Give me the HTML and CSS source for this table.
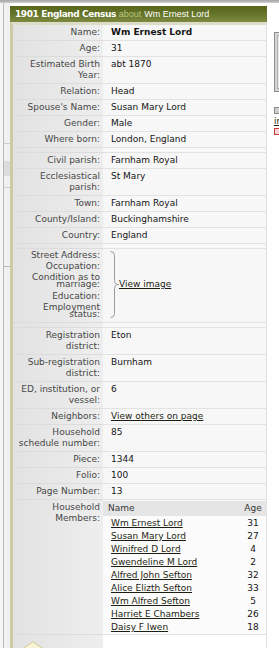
FILE: index.html
```html
<!DOCTYPE html>
<html>
<head>
<meta charset="utf-8">
<title>1901 England Census</title>
<link rel="stylesheet" href="styles.css">
</head>
<body>
<div class="topbar"></div>
<div class="layout">
  <div class="leftcol">
    <div class="lc-inner">
      <div class="lc-gap1"></div>
      <div class="lc-line"></div>
      <div class="lc-gap2"></div>
      <div class="lc-box"></div>
      <div class="lc-gap3"></div>
      <div class="lc-line"></div>
      <div class="lc-gap4"></div>
      <div class="lc-line dark"></div>
    </div>
  </div>

  <div class="panel">
    <div class="panel-head"><b class="ttl">1901 England Census</b> <span class="about">about</span> <span class="who">Wm Ernest Lord</span></div>
    <div class="panel-body">
      <div class="row"><div class="lbl">Name:</div><div class="val strong">Wm Ernest Lord</div></div>
      <div class="row"><div class="lbl">Age:</div><div class="val">31</div></div>
      <div class="row"><div class="lbl">Estimated Birth Year:</div><div class="val">abt 1870</div></div>
      <div class="row"><div class="lbl">Relation:</div><div class="val">Head</div></div>
      <div class="row"><div class="lbl">Spouse's Name:</div><div class="val">Susan Mary Lord</div></div>
      <div class="row"><div class="lbl">Gender:</div><div class="val">Male</div></div>
      <div class="row"><div class="lbl">Where born:</div><div class="val">London, England</div></div>
      <div class="row spacer"><div class="lbl"></div><div class="val"></div></div>
      <div class="row"><div class="lbl">Civil parish:</div><div class="val">Farnham Royal</div></div>
      <div class="row"><div class="lbl">Ecclesiastical parish:</div><div class="val">St Mary</div></div>
      <div class="row"><div class="lbl">Town:</div><div class="val">Farnham Royal</div></div>
      <div class="row"><div class="lbl">County/Island:</div><div class="val">Buckinghamshire</div></div>
      <div class="row"><div class="lbl">Country:</div><div class="val">England</div></div>
      <div class="row spacer"><div class="lbl"></div><div class="val"></div></div>
      <div class="row block">
        <div class="lbl stack">
          <div class="s1">Street Address:</div>
          <div class="s1">Occupation:</div>
          <div class="s2">Condition as to<br>marriage:</div>
          <div class="s1">Education:</div>
          <div class="s2">Employment<br>status:</div>
        </div>
        <div class="val brace-cell">
          <svg class="brace" width="9" height="67" viewBox="0 0 9 67">
            <path d="M0.5 0.5 Q4.5 0.5 4.5 4.5 L4.5 29.5 Q4.5 33.5 7.5 33.5 Q4.5 33.5 4.5 37.5 L4.5 62.5 Q4.5 66.5 0.5 66.5" fill="none" stroke="#9a9a9a" stroke-width="1"/>
            <path d="M7.5 33.5 L9 33.5" stroke="#9a9a9a" stroke-width="1"/>
          </svg>
          <a class="lnk" href="#">View image</a>
        </div>
      </div>
      <div class="row spacer"><div class="lbl"></div><div class="val"></div></div>
      <div class="row"><div class="lbl">Registration district:</div><div class="val">Eton</div></div>
      <div class="row"><div class="lbl">Sub-registration district:</div><div class="val">Burnham</div></div>
      <div class="row"><div class="lbl">ED, institution, or vessel:</div><div class="val">6</div></div>
      <div class="row"><div class="lbl">Neighbors:</div><div class="val"><a class="lnk" href="#">View others on page</a></div></div>
      <div class="row"><div class="lbl">Household schedule number:</div><div class="val">85</div></div>
      <div class="row"><div class="lbl">Piece:</div><div class="val">1344</div></div>
      <div class="row"><div class="lbl">Folio:</div><div class="val">100</div></div>
      <div class="row"><div class="lbl">Page Number:</div><div class="val">13</div></div>
      <div class="row">
        <div class="lbl">Household Members:</div>
        <div class="val hh-cell">
          <div class="hh-head"><span>Name</span><span class="age">Age</span></div>
          <div class="hh-list">
            <div class="hh-item"><a class="lnk" href="#">Wm Ernest Lord</a><span class="age">31</span></div>
            <div class="hh-item"><a class="lnk" href="#">Susan Mary Lord</a><span class="age">27</span></div>
            <div class="hh-item"><a class="lnk" href="#">Winifred D Lord</a><span class="age">4</span></div>
            <div class="hh-item"><a class="lnk" href="#">Gwendeline M Lord</a><span class="age">2</span></div>
            <div class="hh-item"><a class="lnk" href="#">Alfred John Sefton</a><span class="age">32</span></div>
            <div class="hh-item"><a class="lnk" href="#">Alice Elizth Sefton</a><span class="age">33</span></div>
            <div class="hh-item"><a class="lnk" href="#">Wm Alfred Sefton</a><span class="age">5</span></div>
            <div class="hh-item"><a class="lnk" href="#">Harriet E Chambers</a><span class="age">26</span></div>
            <div class="hh-item"><a class="lnk" href="#">Daisy F Iwen</a><span class="age">18</span></div>
          </div>
        </div>
      </div>
      <div class="row foot">
        <div class="lbl foot-lbl">
          <svg class="pointer" width="22" height="8" viewBox="0 0 22 8">
            <polygon points="0.5,8 11,0.8 21.5,8" fill="#f8f4d9" stroke="#d5c78c" stroke-width="1"/>
          </svg>
        </div>
        <div class="val foot-val"></div>
      </div>
    </div>
  </div>

  <div class="rightcol">
    <div class="thumb"><div class="thumb-in"></div></div>
    <div class="ico1"></div>
    <a class="side-link" href="#">image</a>
    <div class="ico2"></div>
  </div>
</div>
</body>
</html>
```

FILE: styles.css
```css
html, body {
  margin: 0;
  padding: 0;
  height: 648px;
  overflow: hidden;
  background: #ffffff;
}
body {
  font-family: "DejaVu Sans", Verdana, sans-serif;
  font-size: 9px;
  line-height: 11px;
  color: #151515;
}
.topbar {
  height: 3px;
  background: linear-gradient(to bottom, #a3a3a3, #cfcfcf);
}
.layout {
  display: flex;
  align-items: stretch;
  height: 645px;
}

/* left strip */
.leftcol {
  width: 10px;
  flex: none;
  background: #f5f5f5;
}
.lc-inner {
  margin-left: 3px;
  height: 100%;
  border-left: 1px solid #b8b8b8;
  background: #f1f1f1;
}
.lc-gap1 { height: 140px; }
.lc-line { height: 1px; background: #cdcdcd; }
.lc-line.dark { background: #b9b9b9; }
.lc-gap2 { height: 17px; }
.lc-box { height: 15px; background: #dcdcdc; }
.lc-gap3 { height: 11px; }
.lc-gap4 { height: 78px; }

/* panel */
.panel {
  width: 257px;
  flex: none;
  margin-top: 3px;
}
.panel-head {
  height: 16px;
  line-height: 16px;
  padding-left: 5px;
  background: linear-gradient(to bottom, #56651a 0%, #66762a 55%, #7d8b42 100%);
  color: #ffffff;
  white-space: nowrap;
  overflow: hidden;
}
.ttl {
  font-family: "DejaVu Sans", Verdana, sans-serif;
  font-weight: bold;
  font-size: 9px;
  letter-spacing: -0.4px;
}
.about, .who {
  font-family: "Liberation Sans", Arial, sans-serif;
  font-size: 9px;
}
.about { color: #b9c47f; }
.who { color: #ffffff; }

.panel-body {
  border-left: 3px solid #cbcba6;
  border-right: 1px solid #e2e2e2;
  border-top: 3px solid #dcdcc8;
}
.row {
  display: grid;
  grid-template-columns: 90px 163px;
}
.lbl {
  padding: 2px 3px 2px 2px;
  text-align: right;
  color: #474747;
  background: linear-gradient(to right, #e2e2e2, #eeeeee);
  border-bottom: 1px solid #dcdcdc;
}
.val {
  padding: 2px 2px 2px 8px;
  background: #f7f7f7;
  border-bottom: 1px solid #e3e3e3;
}
.strong { font-weight: bold; }

.spacer .lbl, .spacer .val {
  padding: 0;
  height: 4px;
}

/* street address block */
.stack { padding: 1px 3px 1px 2px; }
.s1 { line-height: 11px; }
.s2 { line-height: 7px; padding: 2px 0 3px; }
.brace-cell {
  display: flex;
  align-items: center;
  padding: 1px 2px 3px 7px;
}
.brace { display: block; flex: none; }

.lnk {
  color: #1e1e12;
  text-decoration: underline;
}

/* household members */
.hh-cell {
  padding: 1px 0 0 0;
  background: #fbfbfb;
}
.hh-head {
  display: grid;
  grid-template-columns: 1fr 24px;
  padding: 2px 1px 2px 5px;
  background: #e5e5e5;
  color: #383838;
}
.hh-list { padding-top: 1px; }
.hh-item {
  display: grid;
  grid-template-columns: 1fr 24px;
  line-height: 13px;
  padding: 0 1px 0 8px;
}
.hh-item .lnk { justify-self: start; }
.age { text-align: center; }

/* footer */
.foot .lbl, .foot .val {
  border-bottom: none;
  height: 13px;
  padding: 0;
}
.foot-val { background: #ffffff; }
.pointer {
  display: block;
  margin: 6px 0 0 9px;
}

/* right column (cropped widgets) */
.rightcol {
  width: 12px;
  flex: none;
  overflow: hidden;
}
.thumb {
  margin: 29px 0 0 7px;
  width: 20px;
  height: 58px;
  border: 1px solid #8c8c8c;
  background: #d6d6d6;
}
.thumb-in {
  margin: 2px;
  height: 52px;
  border: 1px solid #b3b3b3;
  background: #e8e8e8;
}
.ico1 {
  margin: 15px 0 0 7px;
  width: 7px;
  height: 5px;
  border: 1px solid #8a8a8a;
  background: #cfcfcf;
}
.side-link {
  display: block;
  margin: 2px 0 0 7px;
  line-height: 11px;
  color: #1e1e12;
  text-decoration: underline;
  white-space: nowrap;
}
.ico2 {
  margin: 1px 0 0 7px;
  width: 7px;
  height: 5px;
  border: 1px solid #cc3a3a;
  background: #f4d8d8;
}
```
